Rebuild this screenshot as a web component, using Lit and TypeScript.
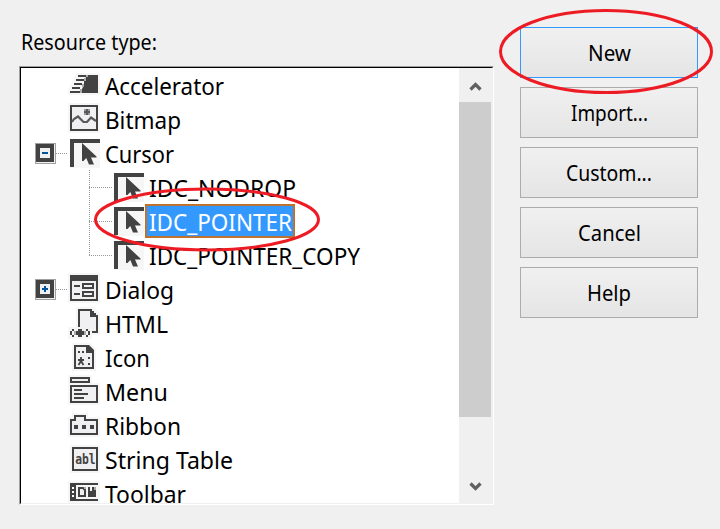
import { LitElement, html, svg, css, nothing } from "lit";
import { customElement, property } from "lit/decorators.js";

const D = "#424242";
const L = "#f0eff1";
const H = "#f6f6f6";

const cursorIcon = svg`
  <rect x="2" y="3" width="30" height="29" fill=${H} />
  <path d="M2 3H32V7H6V31H2Z" fill=${D} />
  <path d="M14 7L28.5 20.5V21.5H23L26 28.5H21L18.3 22L15.5 25H14Z" fill=${D} />`;

const icons: Record<string, unknown> = {
  accelerator: svg`
    <path d="M8 5H32V27H0V22L4 14Z" fill=${H} />
    <path d="M20 7H30V25H14V21L16 17V13L18 9Z" fill=${D} />
    <path d="M18 9h2v-2h-2zM16 13h2v-3h-2zM14 19h2v-3h-2zM12 25h2v-4h-2z" fill="#aaa" />
    <path d="M10 7h8v2h-8zM8 11h8v2h-8zM6 15h8v2h-8zM4 19h8v2h-8zM2 23h10v2h-10z" fill=${D} />`,
  bitmap: svg`
    <rect x="0" y="1" width="32" height="30" fill=${H} />
    <rect x="3" y="4" width="26" height="24" fill=${L} stroke=${D} stroke-width="2" />
    <path d="M4 20L6 17L10 14.5L15.5 20H19L23 15.5L28 19" fill="none" stroke="#5a5a5a" stroke-width="2.2" />
    <path d="M16 7h6v6h-6z" fill="#999" /><path d="M18 7h2v2h2v2h-2v2h-2v-2h-2v-2h2z" fill="#5a5a5a" />`,
  cursor: cursorIcon,
  dialog: svg`
    <rect x="0" y="1" width="32" height="30" fill=${H} />
    <rect x="3" y="4" width="26" height="24" fill=${L} stroke=${D} stroke-width="2" />
    <path d="M2 3h28v6h-28zM6 13h6v2h-6zM6 21h6v2h-6z" fill=${D} />
    <path d="M15 12h10v4h-10zM15 20h10v4h-10z" fill="none" stroke=${D} stroke-width="2" />`,
  html: svg`
    <path d="M8 1H26L32 8V29H24V33H0V21H8Z" fill=${H} />
    <path d="M12 5H22V11H28V25H12Z" fill=${L} />
    <path d="M10 3h14v2h2v2h2v2h2v18h-6v-2h4v-14h-6v-6h-10v16h-2z" fill=${D} />
    <path d="M8 25h2v-2h4v2h2v4h-2v2h-4v-2h-2z" fill=${D} />
    <path d="M6 25h2v4h-2zM16 25h2v4h-2z" fill="#aaa" />
    <path d="M2 25h2v4h-2zM4 23h2v2h-2zM4 29h2v2h-2zM18 23h2v2h-2zM18 29h2v2h-2zM20 25h2v4h-2z" fill=${D} />`,
  icon: svg`
    <path d="M4 3H22L28 9V31H4Z" fill=${H} />
    <path d="M7 6H20L25 11V28H7Z" fill=${L} stroke=${D} stroke-width="2" />
    <path d="M18 5h3l5 5v3h-8zM10 11h2v2h-2zM14 11h2v2h-2zM20 17h2v2h-2zM20 23h2v2h-2z" fill=${D} />
    <path d="M13 17V21M10 20H16M13 21L10.5 25M13 21L15.5 25" fill="none" stroke=${D} stroke-width="1.8" />`,
  menu: svg`
    <path d="M0 1H24V9H32V31H0Z" fill=${H} />
    <path d="M3 4h18v4h-18zM3 12h26v16h-26z" fill=${L} stroke=${D} stroke-width="2" />
    <path d="M6 15h8v2h-8zM6 19h14v2h-14zM6 23h10v2h-10z" fill=${D} />`,
  ribbon: svg`
    <path d="M0 9H4V5H20V9H32V29H0Z" fill=${H} />
    <path d="M3 12H7V8H17V12H29V26H3Z" fill=${L} stroke=${D} stroke-width="2" />
    <path d="M6 17h4v4h-4zM14 17h4v4h-4zM22 17h4v4h-4z" fill=${D} />`,
  string: svg`
    <rect x="2" y="3" width="30" height="28" fill=${H} />
    <rect x="5" y="6" width="24" height="22" fill=${L} stroke=${D} stroke-width="2" />
    <text class="glyph" x="7.2" y="21.5" textLength="20.5" lengthAdjust="spacingAndGlyphs">abl</text>`,
  toolbar: svg`
    <rect x="0" y="5" width="32" height="22" fill=${H} />
    <path d="M2 7h28v2h-28zM2 23h28v2h-28zM2 9h6v14h-6z" fill=${D} />
    <path d="M4 11h2v2h-2zM4 15h2v2h-2zM4 19h2v2h-2z" fill="#fff" />
    <path d="M11 12h4l2 2v6h-6z" fill=${L} stroke=${D} stroke-width="2" />
    <path d="M20 11h2v4h2v-4h2v3h2v7h-8z" fill=${D} />
    <path d="M16 11h2v2h-2zM26 11h2v3h-2z" fill="#aaa" />`,
};

@customElement("fitted-label")
class FittedLabel extends LitElement {
  @property() text = "";
  @property({ type: Number }) width = 100;
  @property({ type: Number }) size = 23.5;
  static styles = css`
    :host { display: block; }
    svg { display: block; overflow: visible; }
    text { font-family: "Noto Sans", "Open Sans", sans-serif; fill: currentColor; }
  `;
  render() {
    return html`<svg width=${this.width} height="34" role="img">
      <text x="0" y="27" font-size=${this.size} textLength=${this.width}
        lengthAdjust="spacingAndGlyphs">${this.text}</text></svg>`;
  }
}

interface Item {
  icon: string; text: string; width: number;
  child?: boolean; last?: boolean; selected?: boolean; box?: "+" | "-";
}

const items: Item[] = [
  { icon: "accelerator", text: "Accelerator", width: 119 },
  { icon: "bitmap", text: "Bitmap", width: 76 },
  { icon: "cursor", text: "Cursor", width: 69, box: "-" },
  { icon: "cursor", text: "IDC_NODROP", width: 147, child: true },
  { icon: "cursor", text: "IDC_POINTER", width: 143, child: true, selected: true },
  { icon: "cursor", text: "IDC_POINTER_COPY", width: 211, child: true, last: true },
  { icon: "dialog", text: "Dialog", width: 69, box: "+" },
  { icon: "html", text: "HTML", width: 63 },
  { icon: "icon", text: "Icon", width: 45 },
  { icon: "menu", text: "Menu", width: 63 },
  { icon: "ribbon", text: "Ribbon", width: 76 },
  { icon: "string", text: "String Table", width: 128 },
  { icon: "toolbar", text: "Toolbar", width: 81 },
];

const buttons = [
  { text: "New", width: 43 },
  { text: "Import...", width: 77 },
  { text: "Custom...", width: 86 },
  { text: "Cancel", width: 63 },
  { text: "Help", width: 44 },
];

@customElement("app-root")
class AppRoot extends LitElement {
  static styles = css`
    :host {
      display: flex; position: relative; box-sizing: border-box; width: 720px; height: 529px;
      padding: 23px 22px 0 19px; gap: 26px; background: #f0f0f0; color: #000; overflow: hidden;
    }
    .left { width: 475px; }
    .caption { height: 43px; padding-left: 2px; }
    .list {
      display: flex; box-sizing: border-box; width: 475px; height: 439px;
      border: 1px solid; border-color: #a0a0a0 #fff #fff #a0a0a0; overflow: hidden;
    }
    .inner {
      display: flex; flex: 1; box-sizing: border-box; background: #fff; overflow: hidden;
      border: 1px solid; border-color: #000 #f0f0f0 #f0f0f0 #000; height: 437px;
    }
    .tree { width: 438px; height: 435px; overflow: hidden; }
    .row { display: flex; height: 34px; }
    .lines, .icon { display: block; flex: none; }
    .name { padding-left: 3px; height: 34px; }
    .selected {
      box-sizing: border-box; width: 150px; margin-left: -1px; padding-left: 4px;
      background: #3399ff; color: #fff; box-shadow: inset 0 0 0 2px #b4763e;
      outline: 1px dotted #d46a00; outline-offset: -1px;
    }
    .glyph { font: bold 14px "DejaVu Sans Mono", monospace; fill: #424242; }
    .dots { stroke: #999; stroke-width: 1; stroke-dasharray: 1 1; fill: none; }
    .scroll { display: flex; flex-direction: column; flex: 1; background: #f0f0f0; height: 435px; }
    .scroll svg { display: block; }
    .thumb { width: 32px; height: 315px; background: #cdcdcd; }
    .down { margin-top: 52px; }
    .arrow { fill: none; stroke: #606060; stroke-width: 3.2; }
    .actions { display: flex; flex-direction: column; gap: 9px; padding-top: 4px; width: 178px; }
    button {
      display: flex; justify-content: center; box-sizing: border-box; width: 178px; height: 51px;
      margin: 0; padding: 6px 0 0; border: 1px solid #acacac; border-radius: 0; color: #000;
      background: linear-gradient(#f0f0f0, #e5e5e5);
    }
    .default { border-color: #3399ff; }
    .marks { position: absolute; left: 0; top: 0; pointer-events: none; }
    .marks ellipse { fill: none; stroke: #ed1c24; stroke-width: 3; }
  `;

  private row(it: Item) {
    const w = it.child ? 91 : 47;
    return html`<div class="row">
      <svg class="lines" width=${w} height="34" shape-rendering="crispEdges">
        ${it.child ? svg`
          <path class="dots" d="M68.5 0V${it.last ? 18 : 34}" />
          <path class="dots" d="M68 17.5H91" />` : nothing}
        ${it.box ? svg`
          <path class="dots" d="M35 17.5H47" />
          <rect x="14" y="7" width="21" height="21" fill="#a0a0a0" />
          <rect x="15" y="8" width="19" height="19" fill="#f0f0f0" />
          <rect x="15" y="8" width="18" height="18" fill=${D} />
          <rect x="19" y="12" width="10" height="10" fill=${L} />
          <rect x="21" y="16" width="6" height="2" fill="#00539c" />
          ${it.box === "+" ? svg`<rect x="23" y="14" width="2" height="6" fill="#00539c" />` : nothing}` : nothing}
      </svg>
      <svg class="icon" width="34" height="34">${icons[it.icon]}</svg>
      <div class="name ${it.selected ? "selected" : ""}">
        <fitted-label .text=${it.text} .width=${it.width}></fitted-label>
      </div>
    </div>`;
  }

  render() {
    return html`
      <div class="left">
        <div class="caption"><fitted-label .text=${"Resource type:"} .width=${136} .size=${21}></fitted-label></div>
        <div class="list"><div class="inner">
          <div class="tree">${items.map((it) => this.row(it))}</div>
          <div class="scroll">
            <svg width="32" height="34"><path class="arrow" d="M11.5 21.5L16.5 16.5L21.5 21.5" /></svg>
            <div class="thumb"></div>
            <svg class="down" width="32" height="34"><path class="arrow" d="M11.5 14.5L16.5 19.5L21.5 14.5" /></svg>
          </div>
        </div></div>
      </div>
      <div class="actions">
        ${buttons.map((b, i) => html`<button class=${i === 0 ? "default" : ""}>
          <fitted-label .text=${b.text} .width=${b.width} .size=${21}></fitted-label>
        </button>`)}
      </div>
      <svg class="marks" width="720" height="529">
        <ellipse cx="606" cy="51.5" rx="105.5" ry="41" />
        <ellipse cx="207" cy="219.5" rx="111.5" ry="30.5" />
      </svg>`;
  }
}
